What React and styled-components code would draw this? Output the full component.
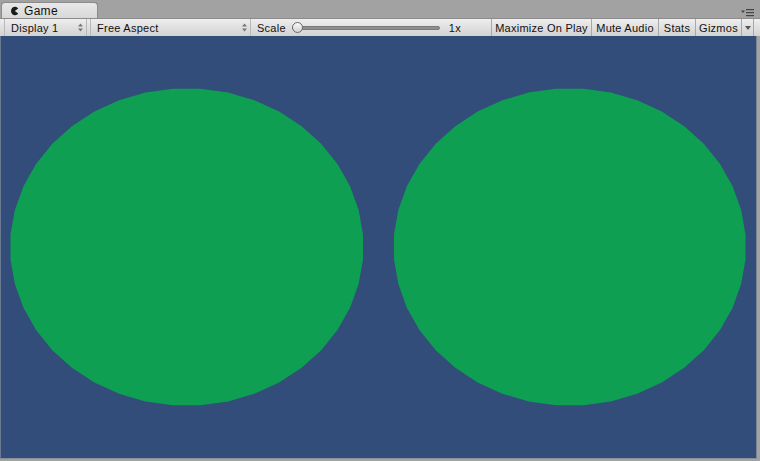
import React from 'react';
import styled, { createGlobalStyle } from 'styled-components';

const GlobalStyle = createGlobalStyle`
  html, body {
    margin: 0;
    padding: 0;
    background: #a2a2a2;
  }
  body {
    font-family: "Liberation Sans", Arial, sans-serif;
    font-size: 11px;
  }
`;

const Window = styled.div`
  width: 760px;
  height: 461px;
  display: flex;
  flex-direction: column;
  background: #a2a2a2;
  overflow: hidden;
`;

const TabStrip = styled.div`
  height: 18px;
  display: flex;
  align-items: flex-end;
  padding-left: 1px;
  box-sizing: border-box;
  position: relative;
`;

const Tab = styled.div`
  width: 97px;
  height: 16px;
  box-sizing: border-box;
  border: 1px solid #8a8a8a;
  border-bottom: none;
  border-radius: 4px 4px 0 0;
  background: linear-gradient(#e8e8e8, #d8d8d8);
  display: flex;
  align-items: center;
  gap: 5px;
  padding-left: 8px;
  color: #111;
  font-size: 12px;
  letter-spacing: 0.3px;
`;

const MenuIcon = styled.div`
  position: absolute;
  right: 5px;
  top: 9px;
  line-height: 0;
`;

const Toolbar = styled.div`
  height: 18px;
  display: flex;
  align-items: stretch;
  box-sizing: border-box;
  border-top: 1px solid #8c8c8c;
  background: linear-gradient(#eeeeee, #d2d2d2);
  color: #111;
  font-size: 11px;
  letter-spacing: 0.25px;
  white-space: nowrap;
  padding-left: 4px;
`;

const Dropdown = styled.div`
  width: ${p => p.$w}px;
  display: flex;
  align-items: center;
  justify-content: space-between;
  box-sizing: border-box;
  padding: 0 3px 0 6px;
  border-left: 1px solid #b8b8b8;
  border-right: 1px solid #b8b8b8;
  margin-right: 3px;
`;

const ScaleGroup = styled.div`
  width: 237px;
  display: flex;
  align-items: center;
  padding-left: 3px;
  box-sizing: border-box;
`;

const Track = styled.div`
  position: relative;
  width: 146px;
  height: 2px;
  margin: 0 9px 0 6px;
  border-radius: 2px;
  background: #8e8e8e;
  border: 1px solid #7a7a7a;
`;

const Thumb = styled.div`
  position: absolute;
  left: -1px;
  top: -5px;
  width: 11px;
  height: 11px;
  border-radius: 50%;
  border: 1px solid #6a6a6a;
  background: linear-gradient(#fafafa, #d2d2d2);
  box-sizing: border-box;
`;

const Button = styled.div`
  width: ${p => p.$w}px;
  display: flex;
  align-items: center;
  justify-content: center;
  box-sizing: border-box;
  border-left: 1px solid #a8a8a8;
`;

const GizmoArrow = styled.div`
  width: 13px;
  display: flex;
  align-items: center;
  justify-content: center;
  box-sizing: border-box;
  border-left: 1px solid #a8a8a8;
  border-right: 1px solid #a8a8a8;
`;

const Viewport = styled.div`
  height: 423px;
  margin-right: 3px;
  background: #324d79;
  border-left: 1px solid #6a7a90;
  border-right: 1px solid #7d8590;
  border-bottom: 1px solid #8a8f96;
  box-sizing: border-box;
  display: flex;
`;

const makePoints = (cx, cy, rx, ry, n) => {
  const pts = [];
  for (let i = 0; i < n; i++) {
    const a = (i / n) * Math.PI * 2 + Math.PI / n;
    pts.push(`${(cx + rx * Math.cos(a)).toFixed(1)},${(cy + ry * Math.sin(a)).toFixed(1)}`);
  }
  return pts.join(' ');
};

const GameIcon = () => (
  <svg width="9" height="10" viewBox="0 0 9 10">
    <path d="M8.2 2.4 A4 4.3 0 1 0 8.2 7.6 L4.8 5 Z" fill="#1a1a1a" />
  </svg>
);

const UpDown = () => (
  <svg width="5" height="9" viewBox="0 0 5 9">
    <path d="M0 3.5 L2.5 0.5 L5 3.5 Z" fill="#777" />
    <path d="M0 5.5 L2.5 8.5 L5 5.5 Z" fill="#777" />
  </svg>
);

const DownArrow = () => (
  <svg width="6" height="4" viewBox="0 0 6 4">
    <path d="M0 0 L6 0 L3 4 Z" fill="#555" />
  </svg>
);

export default function App() {
  return (
    <Window>
      <GlobalStyle />
      <TabStrip>
        <Tab>
          <GameIcon />
          <span>Game</span>
        </Tab>
        <MenuIcon>
          <svg width="14" height="8" viewBox="0 0 14 8">
            <path d="M0 1.5 L4 1.5 L2 4 Z" fill="#444" />
            <rect x="5" y="0" width="8" height="1.2" fill="#444" />
            <rect x="5" y="3" width="8" height="1.2" fill="#444" />
            <rect x="5" y="6" width="8" height="1.2" fill="#444" />
          </svg>
        </MenuIcon>
      </TabStrip>
      <Toolbar>
        <Dropdown $w={83}>
          <span>Display 1</span>
          <UpDown />
        </Dropdown>
        <Dropdown $w={161}>
          <span>Free Aspect</span>
          <UpDown />
        </Dropdown>
        <ScaleGroup>
          <span>Scale</span>
          <Track><Thumb /></Track>
          <span>1x</span>
        </ScaleGroup>
        <Button $w={100}>Maximize On Play</Button>
        <Button $w={67}>Mute Audio</Button>
        <Button $w={37}>Stats</Button>
        <Button $w={46}>Gizmos</Button>
        <GizmoArrow><DownArrow /></GizmoArrow>
      </Toolbar>
      <Viewport>
        <svg width="756" height="422" viewBox="0 0 756 422">
          <polygon points={makePoints(186, 211, 177, 159, 40)} fill="#0f9f53" />
          <polygon points={makePoints(569.5, 211, 176.5, 159, 40)} fill="#0f9f53" />
        </svg>
      </Viewport>
    </Window>
  );
}
